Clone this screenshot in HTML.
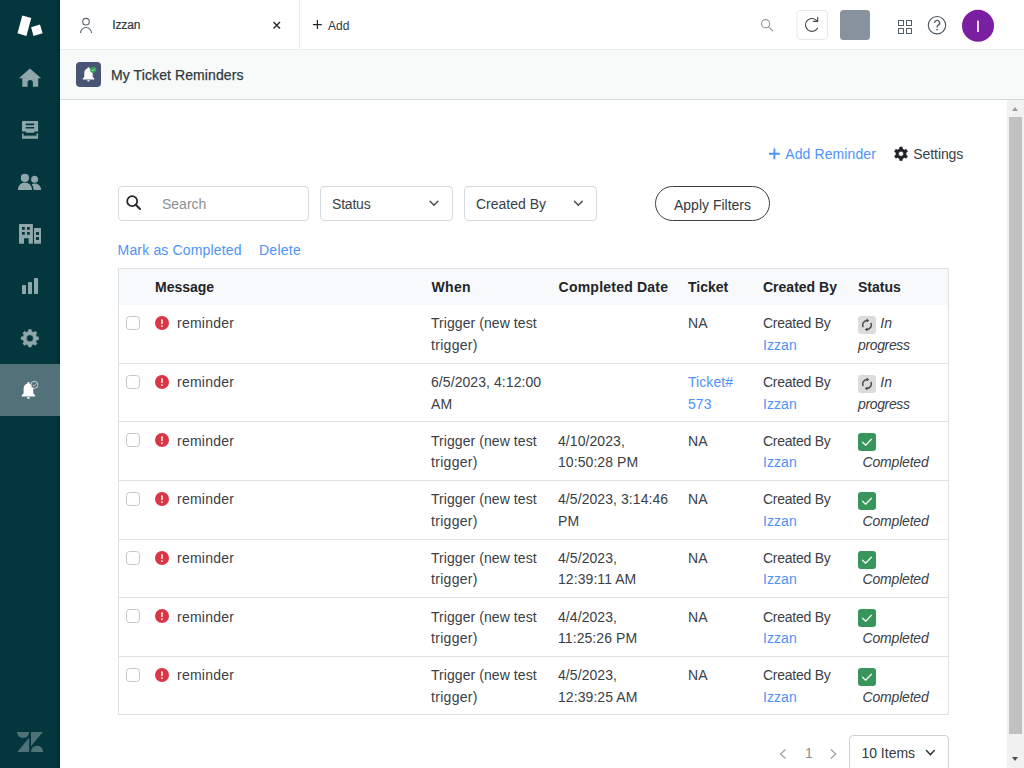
<!DOCTYPE html>
<html lang="en">
<head>
<meta charset="utf-8">
<title>My Ticket Reminders</title>
<style>
*{box-sizing:border-box;margin:0;padding:0}
html,body{width:1024px;height:768px;overflow:hidden;background:#fff}
body{font-family:"Liberation Sans",sans-serif;font-size:14px;color:#3a4046;position:relative}
a{text-decoration:none;color:#4f93fa}
.abs{position:absolute}
/* sidebar */
#nav{position:absolute;left:0;top:0;width:60px;height:768px;background:#03363d;box-shadow:inset -2.5px 0 1.5px -1px #012f36}
#nav svg{position:absolute;display:block}
#nav .sel{position:absolute;left:0;top:364px;width:60px;height:52px;background:#527178}
/* top bar */
#top{position:absolute;left:60px;top:0;width:964px;height:50px;background:#fff;border-bottom:1px solid #e9ebed}
#tab{position:absolute;left:0;top:0;width:240px;height:49px;border-right:1px solid #e9ebed}
#top .t{position:absolute;font-size:12px;color:#2f3941;line-height:14px;white-space:nowrap}
/* header */
#hdr{position:absolute;left:60px;top:50px;width:964px;height:50px;background:#f8f9f9;border-bottom:1px solid #d3d8dc}
#hdr .ic{position:absolute;left:16px;top:12px;width:25px;height:25px;border-radius:4px;background:#4a5575}
#hdr .ttl{letter-spacing:.1px;position:absolute;left:51px;top:16px;font-size:14px;line-height:18px;color:#2f3941;white-space:nowrap;-webkit-text-stroke:0.25px #2f3941}
/* scrollbar */
#sb{position:absolute;left:1007px;top:100px;width:17px;height:668px;background:#f1f1f1}
#sb .th{position:absolute;left:2px;top:17px;width:13px;height:617px;background:#c1c1c1}
#sb .up{position:absolute;left:5.300px;top:7px;width:0;height:0;border-left:3.500px solid transparent;border-right:3.500px solid transparent;border-bottom:4px solid #959ca3}
#sb .dn{position:absolute;left:5px;top:657px;width:0;height:0;border-left:3.5px solid transparent;border-right:3.5px solid transparent;border-top:4px solid #505050}
/* content */
.lnk{position:absolute;white-space:nowrap;line-height:16px;color:#4f93fa}
.txt{position:absolute;white-space:nowrap;line-height:16px}
.box{position:absolute;top:186px;height:35px;border:1px solid #d5dadf;border-radius:4px;background:#fff}
.box span{position:absolute;top:9px;line-height:16px;white-space:nowrap}
.box svg{position:absolute}
#apply{position:absolute;left:655px;top:186px;width:115px;height:35px;border:1px solid #3a3f45;border-radius:18px;text-align:center;line-height:36px;color:#343a40}
/* table */
#tbl{position:absolute;left:118px;top:268px;width:831px;height:447px;border:1px solid #dee2e6}
#th{position:absolute;left:0;top:0;width:829px;height:36px;background:#f8f9fa}
#th b{position:absolute;top:10px;line-height:16px;color:#212529;white-space:nowrap}
.row{position:absolute;left:0;width:829px;height:58.5px;border-bottom:1px solid #dee2e6}
.row .c{letter-spacing:.07px;position:absolute;top:calc(7.2px + var(--d));line-height:22px;white-space:nowrap}
.row .c2{top:calc(28.9px + var(--d) + var(--e))}
.cb{position:absolute;left:7px;top:11px;width:14px;height:14px;border:1px solid #c6c6c6;border-radius:3.5px;background:#fff}
.er{position:absolute;left:35.500px;top:11px;width:14px;height:14px}
.st{position:absolute;left:739px;top:11px;width:18px;height:18px;border-radius:3px}
.st.p{background:#dcdcdc}
.st.d{background:#38965c}
i{font-style:italic}
/* pager */
#pg{position:absolute;left:849px;top:735px;width:100px;height:40px;border:1px solid #ced4da;border-radius:4px;background:#fff}
#pg span{position:absolute;left:11.400px;top:9.400px;line-height:16px;white-space:nowrap;color:#343a40}
</style>
</head>
<body>

<div id="nav">
  <div class="sel"></div>
  <svg width="60" height="768" viewBox="0 0 60 768" style="left:0;top:0">
    <!-- logo -->
    <path d="M22.300 15.600L31.300 18.100L26.400 36L17.500 33.300Z" fill="#fff"/>
    <path d="M31.100 27.200L40 24.600L42.600 33.300L33.500 36Z" fill="#fff"/>
    <g fill="#8fa6aa">
      <!-- home -->
      <path d="M29.9 68.6L41.2 78.3H38.2V86.8H32.9V82.6A2.65 2.65 0 0 0 27.6 82.6V86.8H22.3V78.3H18.8Z"/>
      <!-- views -->
      <path d="M22 121.6a.6.6 0 0 1 .6-.6h14.9a.6.6 0 0 1 .6.6v10H34.3v1.2H25.8v-1.2H22ZM25.8 123.6v1.6h8.4v-1.6ZM25.8 127v1.6h8.4V127Z" fill-rule="evenodd"/>
      <path d="M22 133.4h1.6v3.4h12.9v-3.4h1.6v4.8a.6.6 0 0 1-.6.6H22.6a.6.6 0 0 1-.6-.6Z"/>
      <rect x="23.600" y="135.600" width="12.900" height="1.400" opacity=".85"/>
      <!-- people -->
      <circle cx="24.9" cy="177.9" r="4.1"/>
      <path d="M17.9 190c0-4.3 3.2-7.4 7-7.4s7.1 3.1 7.1 7.4Z"/>
      <circle cx="34.6" cy="179.3" r="3.5"/>
      <path d="M31.6 184.2c1-.4 1.9-.6 3-.6 3.600 0 6.500 2.700 6.500 6.400H33.600c0-2.300-.7-4.300-2-5.800Z"/>
      <!-- building -->
      <path d="M19 224.600a.6.6 0 0 1 .6-.6h12.700a.6.600 0 0 1 .6.600v18.600a.6.600 0 0 1-.6.600H28.700v-5.600H24v5.600H19.600a.6.600 0 0 1-.6-.6ZM22 227v2.800h2.800V227ZM27 227v2.800h2.800V227ZM22 232v2.800h2.800V232ZM27 232v2.800h2.800V232Z" fill-rule="evenodd"/>
      <path d="M34 228.600a.6.600 0 0 1 .6-.6h5.800a.6.600 0 0 1 .6.600v14.600a.6.600 0 0 1-.6.600H34.600a.6.600 0 0 1-.6-.6ZM36 232v3h3v-3ZM36 237v3h3v-3Z" fill-rule="evenodd"/>
      <!-- bars -->
      <rect x="22" y="284.900" width="4" height="9.200" rx=".9"/>
      <rect x="28" y="282" width="4" height="12.100" rx=".9"/>
      <rect x="34" y="278" width="4.100" height="16.100" rx=".9"/>
      <!-- gear -->
      <path stroke="#8fa6aa" stroke-width=".6" stroke-linejoin="round" fill-rule="evenodd" d="M28.29 331.59L28.59 329.60L31.21 329.60L31.51 331.59L33.51 332.42L35.13 331.22L36.98 333.07L35.78 334.69L36.61 336.69L38.60 336.99L38.60 339.61L36.61 339.91L35.78 341.91L36.98 343.53L35.13 345.38L33.51 344.18L31.51 345.01L31.21 347.00L28.59 347.00L28.29 345.01L26.29 344.18L24.67 345.38L22.82 343.53L24.02 341.91L23.19 339.91L21.20 339.61L21.20 336.99L23.19 336.69L24.02 334.69L22.82 333.07L24.67 331.22L26.29 332.42ZM26.40 338.30a3.5 3.5 0 1 0 7.0 0a3.5 3.5 0 1 0 -7.0 0Z"/>
    </g>
    <!-- bell -->
    <path d="M28.400 382.100c.7 0 1.100.5 1.100 1.100v.4c2.400.6 3.800 2.700 3.800 5.300v4.300l1.900 2.300v1H21.700v-1l1.900-2.300v-4.300c0-2.600 1.400-4.700 3.800-5.300v-.4c0-.6.400-1.100 1-1.100ZM26.900 397.300h3.100a1.550 1.550 0 0 1-3.100 0Z" fill="#fff"/>
    <circle cx="34.400" cy="384.800" r="3.500" fill="#527178" stroke="#e3e6f6" stroke-width=".8"/>
    <path d="M32.700 384.900l1.200 1.200 2.300-2.500" fill="none" stroke="#d5dbe8" stroke-width=".8"/>
    <!-- zendesk -->
    <g fill="#4f7178">
      <path d="M17 732H29.200A6.100 6.100 0 0 1 17 732Z"/>
      <path d="M29.200 737.600V751.900H17.300Z"/>
      <path d="M31 732H42.900L31 746.300Z"/>
      <path d="M31 751.900A6.050 6.050 0 0 1 43.100 751.900Z"/>
    </g>
  </svg>
</div>

<div id="top">
  <div id="tab"></div>
  <svg class="abs" style="left:0;top:0" width="964" height="49" viewBox="60 0 964 49">
    <!-- person -->
    <g fill="none" stroke="#5b636b" stroke-width="1.1">
      <circle cx="86" cy="21.700" r="3.300"/>
      <path d="M80.500 33a5.500 5.500 0 0 1 11 0"/>
    </g>
    <!-- close x -->
    <path d="M273.500 22l6.500 6.500M280 22l-6.500 6.500" stroke="#1f262b" stroke-width="1.400" fill="none"/>
    <!-- plus -->
    <path d="M317.400 20.100v8.900M312.900 24.550h8.900" stroke="#1f262b" stroke-width="1.200" fill="none"/>
    <!-- search -->
    <g fill="none" stroke="#8e99a2" stroke-width="1.100">
      <circle cx="765.600" cy="23.700" r="4.100"/>
      <path d="M768.600 26.800l4.100 4.100" stroke-linecap="round"/>
    </g>
    <!-- reload -->
    <rect x="797" y="10.500" width="30.500" height="29" rx="3.500" fill="#fff" stroke="#e6e9eb"/>
    <path d="M817.300 21.300A6.450 6.450 0 1 0 817.500 28.200" fill="none" stroke="#414b53" stroke-width="1.150" stroke-linecap="round"/>
    <path d="M817.700 17.300v4.100h-4.400" fill="none" stroke="#414b53" stroke-width="1.150" stroke-linecap="round" stroke-linejoin="miter"/>
    <!-- grey square -->
    <rect x="840" y="10" width="30" height="30" rx="3.500" fill="#87929d"/>
    <!-- grid -->
    <g fill="none" stroke="#555f67" stroke-width="1">
      <rect x="898.500" y="20.500" width="5" height="5"/>
      <rect x="906.500" y="20.500" width="5" height="5"/>
      <rect x="898.500" y="28.500" width="5" height="5"/>
      <rect x="906.500" y="28.500" width="5" height="5"/>
    </g>
    <!-- help -->
    <circle cx="937" cy="25.200" r="8.700" fill="none" stroke="#49545c" stroke-width="1.100"/>
    <path d="M934.600 22.900a2.500 2.500 0 1 1 3.700 2.200c-.8.500-1.200.9-1.200 1.900v.4" fill="none" stroke="#49545c" stroke-width="1.300"/>
    <circle cx="937.100" cy="29.600" r=".85" fill="#49545c"/>
    <!-- avatar -->
    <circle cx="978" cy="25.800" r="16" fill="#7b1fa2"/>
    <rect x="977.150" y="20.600" width="1.700" height="11.400" fill="#fff"/>
  </svg>
  <span class="t" style="left:52.300px;top:17.700px;letter-spacing:-.15px;-webkit-text-stroke:.2px #2f3941">Izzan</span>
  <span class="t" style="left:268px;top:18.500px">Add</span>
</div>

<div id="hdr">
  <div class="ic"><svg width="25" height="25" viewBox="76 62 25 25" style="display:block">
    <path d="M88.500 67.200c.6 0 1 .4 1 1v.400c2 .5 3.200 2.300 3.200 4.500v3.700l1.600 1.900v.9H82.700v-.9l1.600-1.900v-3.700c0-2.200 1.200-4 3.200-4.500v-.4c0-.6.400-1 1-1ZM87.100 80.200h2.800a1.400 1.400 0 0 1-2.800 0Z" fill="#fff"/>
    <circle cx="93.200" cy="69.800" r="3.100" fill="#2fa24f"/>
    <path d="M91.800 69.900l1 1 1.900-2.100" fill="none" stroke="#e6f4ea" stroke-width=".8"/>
  </svg></div>
  <div class="ttl">My Ticket Reminders</div>
</div>

<div id="sb"><div class="up"></div><div class="th"></div><div class="dn"></div></div>

<div id="main">
  <a class="lnk" style="left:785.300px;top:146.300px;letter-spacing:.1px">Add Reminder</a>
  <span class="txt" style="left:913.300px;top:146.200px;letter-spacing:-.08px">Settings</span>

  <div class="box" style="left:118px;width:191px"><span style="left:43px;color:#8a9095">Search</span></div>
  <div class="box" style="left:320px;width:133px"><span style="left:11px;letter-spacing:-.2px">Status</span></div>
  <div class="box" style="left:464px;width:133px"><span style="left:11px">Created By</span></div>
  <div id="apply">Apply Filters</div>

  <a class="lnk" style="left:117.600px;top:242.300px;letter-spacing:.16px">Mark as Completed</a>
  <a class="lnk" style="left:259px;top:242.300px;letter-spacing:.25px">Delete</a>

  <div id="tbl">
    <div id="th">
      <b style="left:36px">Message</b>
      <b style="left:312.600px;letter-spacing:.3px">When</b>
      <b style="left:439.600px;letter-spacing:.22px">Completed Date</b>
      <b style="left:569px">Ticket</b>
      <b style="left:644px">Created By</b>
      <b style="left:739px">Status</b>
    </div>
    <!--ROWS-START-->
    <div class="row" style="top:36px;height:59px;--d:0.1px;--e:0px">
      <div class="cb"></div><svg class="er" viewBox="0 0 14 14"><circle cx="7" cy="7" r="7" fill="#dc3545"/><rect x="6.250" y="3.200" width="1.500" height="4.900" rx=".5" fill="#fff"/><circle cx="7" cy="10.100" r=".95" fill="#fff"/></svg>
      <span class="c" style="left:58px;letter-spacing:.25px">reminder</span>
      <span class="c" style="left:312px">Trigger (new test</span><span class="c c2" style="left:312px;letter-spacing:.3px">trigger)</span>
      <span class="c" style="left:569px">NA</span>
      <span class="c" style="left:644px;letter-spacing:-.25px">Created By</span><a class="c c2" style="left:644px">Izzan</a>
      <div class="st p"><svg width="18" height="18" viewBox="0 0 18 18"><g fill="none" stroke="#4a4a4a" stroke-width="1.5"><path d="M5.2 11.2A4.4 4.4 0 0 1 9 4.6"/><path d="M12.8 6.8A4.4 4.4 0 0 1 9 13.4"/></g><path d="M8.6 2.6l2.6 2-2.6 2z" fill="#4a4a4a"/><path d="M9.4 15.4l-2.6-2 2.6-2z" fill="#4a4a4a"/></svg></div><i class="c" style="left:761.300px">In</i><i class="c c2" style="left:739px;letter-spacing:-.35px">progress</i>
    </div>
    <div class="row" style="top:95px;height:58px;--d:0.1px;--e:0px">
      <div class="cb"></div><svg class="er" viewBox="0 0 14 14"><circle cx="7" cy="7" r="7" fill="#dc3545"/><rect x="6.250" y="3.200" width="1.500" height="4.900" rx=".5" fill="#fff"/><circle cx="7" cy="10.100" r=".95" fill="#fff"/></svg>
      <span class="c" style="left:58px;letter-spacing:.25px">reminder</span>
      <span class="c" style="left:312px">6/5/2023, 4:12:00</span><span class="c c2" style="left:312px">AM</span>
      <a class="c" style="left:569px">Ticket#</a><a class="c c2" style="left:569px">573</a>
      <span class="c" style="left:644px;letter-spacing:-.25px">Created By</span><a class="c c2" style="left:644px">Izzan</a>
      <div class="st p"><svg width="18" height="18" viewBox="0 0 18 18"><g fill="none" stroke="#4a4a4a" stroke-width="1.5"><path d="M5.2 11.2A4.4 4.4 0 0 1 9 4.6"/><path d="M12.8 6.8A4.4 4.4 0 0 1 9 13.4"/></g><path d="M8.6 2.6l2.6 2-2.6 2z" fill="#4a4a4a"/><path d="M9.4 15.4l-2.6-2 2.6-2z" fill="#4a4a4a"/></svg></div><i class="c" style="left:761.300px">In</i><i class="c c2" style="left:739px;letter-spacing:-.35px">progress</i>
    </div>
    <div class="row" style="top:153px;height:59px;--d:0.5px;--e:0px">
      <div class="cb"></div><svg class="er" viewBox="0 0 14 14"><circle cx="7" cy="7" r="7" fill="#dc3545"/><rect x="6.250" y="3.200" width="1.500" height="4.900" rx=".5" fill="#fff"/><circle cx="7" cy="10.100" r=".95" fill="#fff"/></svg>
      <span class="c" style="left:58px;letter-spacing:.25px">reminder</span>
      <span class="c" style="left:312px">Trigger (new test</span><span class="c c2" style="left:312px;letter-spacing:.3px">trigger)</span>
      <span class="c" style="left:439px">4/10/2023,</span><span class="c c2" style="left:439px">10:50:28 PM</span>
      <span class="c" style="left:569px">NA</span>
      <span class="c" style="left:644px;letter-spacing:-.25px">Created By</span><a class="c c2" style="left:644px">Izzan</a>
      <div class="st d"><svg width="18" height="18" viewBox="0 0 18 18"><path d="M4.6 9.2l3 3 5.8-6" fill="none" stroke="#f1f8f3" stroke-width="1.250" stroke-linecap="round" stroke-linejoin="round"/></svg></div><i class="c c2" style="left:743.600px;letter-spacing:-.2px">Completed</i>
    </div>
    <div class="row" style="top:212px;height:59px;--d:0.2px;--e:0px">
      <div class="cb"></div><svg class="er" viewBox="0 0 14 14"><circle cx="7" cy="7" r="7" fill="#dc3545"/><rect x="6.250" y="3.200" width="1.500" height="4.900" rx=".5" fill="#fff"/><circle cx="7" cy="10.100" r=".95" fill="#fff"/></svg>
      <span class="c" style="left:58px;letter-spacing:.25px">reminder</span>
      <span class="c" style="left:312px">Trigger (new test</span><span class="c c2" style="left:312px;letter-spacing:.3px">trigger)</span>
      <span class="c" style="left:439px">4/5/2023, 3:14:46</span><span class="c c2" style="left:439px">PM</span>
      <span class="c" style="left:569px">NA</span>
      <span class="c" style="left:644px;letter-spacing:-.25px">Created By</span><a class="c c2" style="left:644px">Izzan</a>
      <div class="st d"><svg width="18" height="18" viewBox="0 0 18 18"><path d="M4.6 9.2l3 3 5.8-6" fill="none" stroke="#f1f8f3" stroke-width="1.250" stroke-linecap="round" stroke-linejoin="round"/></svg></div><i class="c c2" style="left:743.600px;letter-spacing:-.2px">Completed</i>
    </div>
    <div class="row" style="top:271px;height:58px;--d:0px;--e:-0.7px">
      <div class="cb"></div><svg class="er" viewBox="0 0 14 14"><circle cx="7" cy="7" r="7" fill="#dc3545"/><rect x="6.250" y="3.200" width="1.500" height="4.900" rx=".5" fill="#fff"/><circle cx="7" cy="10.100" r=".95" fill="#fff"/></svg>
      <span class="c" style="left:58px;letter-spacing:.25px">reminder</span>
      <span class="c" style="left:312px">Trigger (new test</span><span class="c c2" style="left:312px;letter-spacing:.3px">trigger)</span>
      <span class="c" style="left:439px">4/5/2023,</span><span class="c c2" style="left:439px">12:39:11 AM</span>
      <span class="c" style="left:569px">NA</span>
      <span class="c" style="left:644px;letter-spacing:-.25px">Created By</span><a class="c c2" style="left:644px">Izzan</a>
      <div class="st d"><svg width="18" height="18" viewBox="0 0 18 18"><path d="M4.6 9.2l3 3 5.8-6" fill="none" stroke="#f1f8f3" stroke-width="1.250" stroke-linecap="round" stroke-linejoin="round"/></svg></div><i class="c c2" style="left:743.600px;letter-spacing:-.2px">Completed</i>
    </div>
    <div class="row" style="top:329px;height:59px;--d:0.3px;--e:0px">
      <div class="cb"></div><svg class="er" viewBox="0 0 14 14"><circle cx="7" cy="7" r="7" fill="#dc3545"/><rect x="6.250" y="3.200" width="1.500" height="4.900" rx=".5" fill="#fff"/><circle cx="7" cy="10.100" r=".95" fill="#fff"/></svg>
      <span class="c" style="left:58px;letter-spacing:.25px">reminder</span>
      <span class="c" style="left:312px">Trigger (new test</span><span class="c c2" style="left:312px;letter-spacing:.3px">trigger)</span>
      <span class="c" style="left:439px">4/4/2023,</span><span class="c c2" style="left:439px">11:25:26 PM</span>
      <span class="c" style="left:569px">NA</span>
      <span class="c" style="left:644px;letter-spacing:-.25px">Created By</span><a class="c c2" style="left:644px">Izzan</a>
      <div class="st d"><svg width="18" height="18" viewBox="0 0 18 18"><path d="M4.6 9.2l3 3 5.8-6" fill="none" stroke="#f1f8f3" stroke-width="1.250" stroke-linecap="round" stroke-linejoin="round"/></svg></div><i class="c c2" style="left:743.600px;letter-spacing:-.2px">Completed</i>
    </div>
    <div class="row" style="top:388px;height:58px;--d:0px;--e:0px">
      <div class="cb"></div><svg class="er" viewBox="0 0 14 14"><circle cx="7" cy="7" r="7" fill="#dc3545"/><rect x="6.250" y="3.200" width="1.500" height="4.900" rx=".5" fill="#fff"/><circle cx="7" cy="10.100" r=".95" fill="#fff"/></svg>
      <span class="c" style="left:58px;letter-spacing:.25px">reminder</span>
      <span class="c" style="left:312px">Trigger (new test</span><span class="c c2" style="left:312px;letter-spacing:.3px">trigger)</span>
      <span class="c" style="left:439px">4/5/2023,</span><span class="c c2" style="left:439px">12:39:25 AM</span>
      <span class="c" style="left:569px">NA</span>
      <span class="c" style="left:644px;letter-spacing:-.25px">Created By</span><a class="c c2" style="left:644px">Izzan</a>
      <div class="st d"><svg width="18" height="18" viewBox="0 0 18 18"><path d="M4.6 9.2l3 3 5.8-6" fill="none" stroke="#f1f8f3" stroke-width="1.250" stroke-linecap="round" stroke-linejoin="round"/></svg></div><i class="c c2" style="left:743.600px;letter-spacing:-.2px">Completed</i>
    </div>
    <!--ROWS-END-->
  </div>

  <div id="pg"><span>10 Items</span></div>
  <span class="txt" style="left:805px;top:745px;color:#8a9095">1</span>
  <svg class="abs" id="ov" style="left:0;top:0;pointer-events:none" width="1024" height="768" viewBox="0 0 1024 768">
    <!-- plus add reminder -->
    <path d="M774.400 148.400v10.800M769 153.800h10.800" stroke="#4f93fa" stroke-width="1.900" fill="none"/>
    <!-- settings gear -->
    <path fill="#1e2226" stroke="#1e2226" stroke-width=".6" stroke-linejoin="round" fill-rule="evenodd" d="M899.53 148.92L899.72 147.07L902.28 147.07L902.47 148.92L904.49 150.08L906.19 149.32L907.47 151.55L905.97 152.64L905.97 154.96L907.47 156.05L906.19 158.28L904.49 157.52L902.47 158.68L902.28 160.53L899.72 160.53L899.53 158.68L897.51 157.52L895.81 158.28L894.53 156.05L896.03 154.96L896.03 152.64L894.53 151.55L895.81 149.32L897.51 150.08ZM898.50 153.80a2.5 2.5 0 1 0 5.0 0a2.5 2.5 0 1 0 -5.0 0Z"/>
    <!-- search icon -->
    <circle cx="132.200" cy="201.200" r="5" fill="none" stroke="#24282c" stroke-width="1.750"/>
    <path d="M136 205l4 4" stroke="#24282c" stroke-width="1.900" stroke-linecap="round"/>
    <path d="M430.100 201.300L434 205.200L437.900 201.300" fill="none" stroke="#484d52" stroke-width="1.500" stroke-linecap="round" stroke-linejoin="round"/>
    <path d="M574.400 201.300L578.300 205.200L582.200 201.300" fill="none" stroke="#484d52" stroke-width="1.500" stroke-linecap="round" stroke-linejoin="round"/>
    <path d="M926.500 750.500L930.400 754.800L934.300 750.500" fill="none" stroke="#343a40" stroke-width="1.600" stroke-linecap="round" stroke-linejoin="round"/>
    <!-- pager -->
    <path d="M785.500 749.500L780.500 754L785.500 758.500" fill="none" stroke="#9aa0a6" stroke-width="1.200"/>
    <path d="M830.800 749.500L835.800 754L830.800 758.500" fill="none" stroke="#9aa0a6" stroke-width="1.200"/>
  </svg>
</div>

</body>
</html>
